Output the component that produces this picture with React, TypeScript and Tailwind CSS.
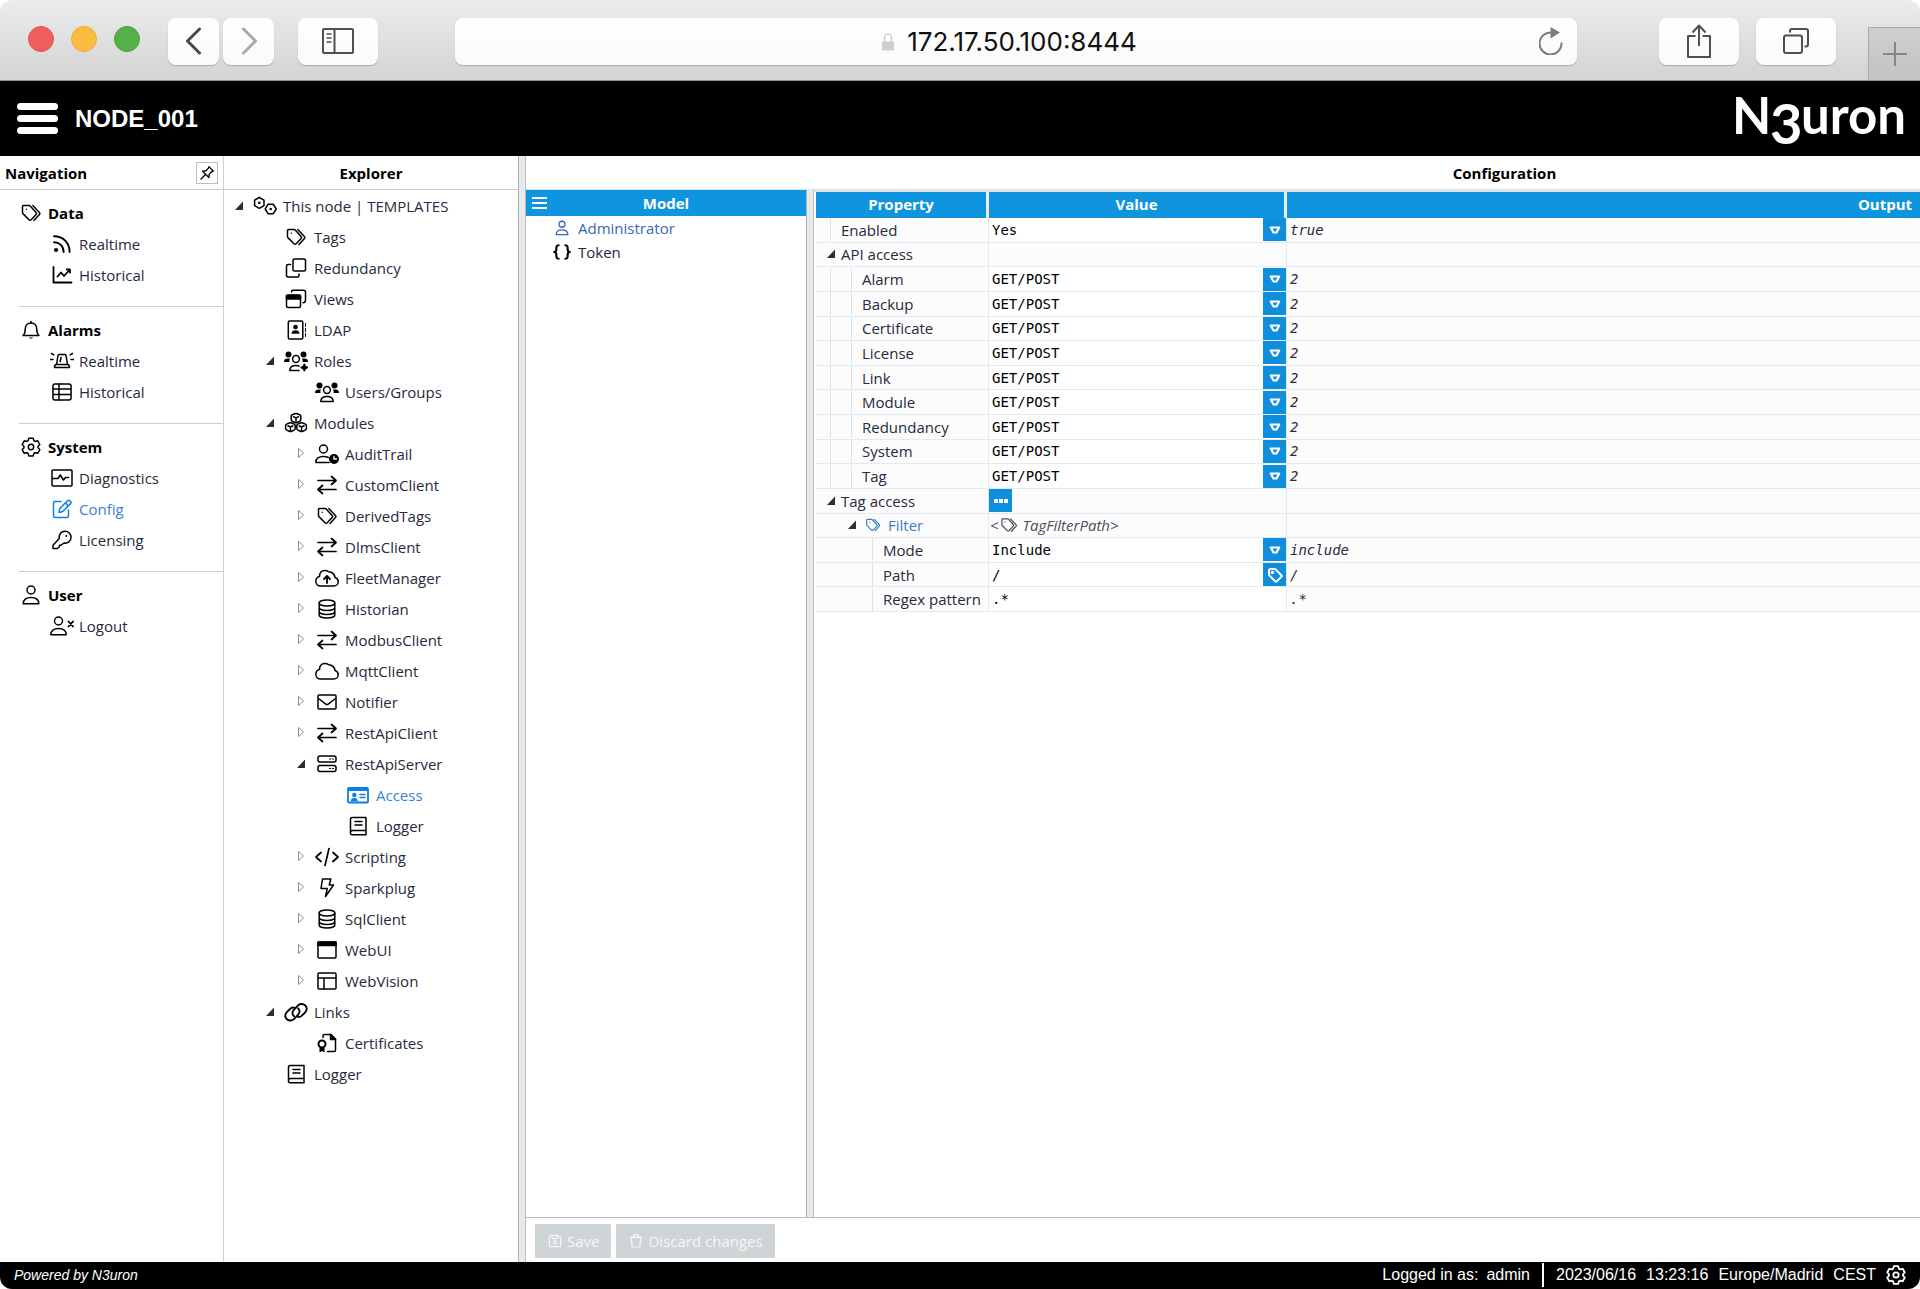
import React from 'react';

const SANS = "font-['Open_Sans','Noto_Sans',sans-serif]";
const MONO = "font-['DejaVu_Sans_Mono','Liberation_Mono',monospace]";
const ARIAL = "font-['Liberation_Sans',Arial,sans-serif]";

const TAGS = (
  <>
    <path d="M4.500 4.500h5.600a1.500 1.500 0 0 1 1.100.5l5.900 6.400a1.600 1.600 0 0 1 0 2.200l-4.900 5.200a1.500 1.500 0 0 1-2.200 0l-6.100-6.200a1.500 1.500 0 0 1-.4-1V5.500a1 1 0 0 1 1-1z" />
    <path d="M13.800 4.600l6.600 6.900a1.500 1.500 0 0 1 0 2.100l-5.400 5.900" />
    <circle cx="7.300" cy="8.300" r=".7" fill="currentColor" stroke="none" />
  </>
);

const PEOPLE = (
  <>
    <g fill="currentColor" stroke="none">
      <circle cx="4.500" cy="5.500" r="3" />
      <circle cx="19.500" cy="5.500" r="3" />
      <path d="M0 13c0-2.500 1.500-3.600 3.500-3.600h2.700c-.9 1.100-1 2.400-.7 3.600z" />
      <path d="M24 13c0-2.500-1.500-3.600-3.500-3.600h-2.700c.9 1.100 1 2.400.7 3.600z" />
    </g>
    <circle cx="12" cy="10" r="3.400" />
  </>
);

const ICONS: Record<string, React.ReactNode> = {
  tags: TAGS,
  rss: (
    <g strokeWidth="1.900">
      <circle cx="6" cy="18" r="2.100" fill="currentColor" stroke="none" />
      <path d="M4 10.300c5.500 0 9.600 3.800 9.600 9.700M4 4.300c9 0 15.600 6.300 15.600 15.700" />
    </g>
  ),
  chart: <path strokeWidth="1.800" d="M3.500 4v15.500h18M7.500 13.500l3.500-4 3 3.500 6-6.500M16.800 6.500H20v3.200" />,
  bell: (
    <>
      <path d="M4 17.500h16c-1.700-1.500-2.300-3-2.300-6.800 0-3.400-2.300-5.700-5.700-5.700s-5.700 2.300-5.700 5.700c0 3.800-.6 5.300-2.300 6.800z" />
      <path d="M12 5V3.500" />
      <path d="M10 19.500h4c-.3 1.300-3.700 1.300-4 0z" fill="currentColor" stroke="none" />
    </>
  ),
  siren: (
    <>
      <path d="M6.500 15.500L8 6.500a1 1 0 0 1 1-.9h6a1 1 0 0 1 1 .9l1.500 9M4.500 18.500c0-2 .5-3 2-3h11c1.500 0 2 1 2 3z" />
      <path d="M11 8.500l-.8 4M0 10.500h3M21 10.500h3M1.500 4.500l2.300 1.300M22.500 4.500l-2.300 1.300" />
    </>
  ),
  table: (
    <>
      <rect x="3" y="4" width="18" height="16" rx="2" />
      <path d="M3 9h18M3 14.500h18M9 4v16" />
    </>
  ),
  gear: (
    <>
      <path d="M9.800 3.200h4.400l.7 2.500 1.200.7 2.600-.6 2.100 3.700-1.800 1.900v1.300l1.800 1.900-2.100 3.700-2.600-.6-1.200.7-.7 2.500H9.800l-.7-2.500-1.200-.7-2.600.6-2.100-3.700L5 12.700v-1.300L3.200 9.500l2.100-3.700 2.600.6 1.200-.7z" />
      <circle cx="12" cy="12" r="2.700" />
    </>
  ),
  pulse: (
    <>
      <rect x="2" y="4" width="20" height="16" rx="1" />
      <path d="M2.500 12.500H8l2.200-3.500 3.300 5 2-2.500h3" />
    </>
  ),
  edit: (
    <>
      <path d="M11 4.500H5A1.500 1.500 0 0 0 3.500 6v13A1.500 1.500 0 0 0 5 20.500h12a1.500 1.500 0 0 0 1.500-1.500v-6" />
      <path d="M9 15.500l.8-4 7.700-7.700a1.700 1.700 0 0 1 2.400 0l.6.6a1.700 1.700 0 0 1 0 2.400L12.800 14.500zM15.500 6l3 3" />
    </>
  ),
  key: (
    <>
      <path d="M3 20.500v-3.300l6.300-6.700c-.8-3.800 1.700-7.200 5.700-7.200 3.400 0 6 2.600 6 5.900 0 4-3.300 6.500-7 5.800l-3 2.200H9.500l-.3 1.800-1.900 1.500z" />
      <circle cx="16.300" cy="8" r="1" fill="currentColor" stroke="none" />
    </>
  ),
  user: (
    <>
      <circle cx="12" cy="7" r="4" />
      <path d="M4.200 20.800c0-4.300 3-6.300 7.800-6.300s7.800 2 7.800 6.300z" />
    </>
  ),
  logout: (
    <>
      <circle cx="8.500" cy="7" r="4" />
      <path d="M.8 20.800c0-4.300 3-6.300 7.700-6.300s7.700 2 7.700 6.300z" />
      <path strokeWidth="1.800" d="M18.500 7.500l4.500 5M23 7.500l-4.500 5" />
    </>
  ),
  node: (
    <>
      <path d="M6.300 3.500l4.700 2.700v5.400l-4.700 2.700-4.700-2.700V6.200z" />
      <path d="M15 10.300h5.400l2.800 4.700-2.800 4.700H15L12.200 15z" />
      <circle cx="6.300" cy="8.900" r="1.300" fill="currentColor" stroke="none" />
      <circle cx="17.700" cy="15" r="1.300" fill="currentColor" stroke="none" />
    </>
  ),
  copy: (
    <>
      <rect x="9" y="3" width="12.500" height="12" rx="1.500" />
      <path d="M6.500 8.500H4A1.500 1.500 0 0 0 2.500 10v9.500A1.500 1.500 0 0 0 4 21h9.500a1.500 1.500 0 0 0 1.500-1.500V18" />
    </>
  ),
  views: (
    <>
      <rect x="2.500" y="8" width="14" height="12.500" rx="1.500" />
      <path d="M2.500 8.500h14V12h-14z" fill="currentColor" />
      <path d="M7.500 5c0-1.200.5-1.700 1.500-1.700h10.500a2 2 0 0 1 2 2V13c0 2-.8 2.800-2.500 2.800" />
    </>
  ),
  ldap: (
    <>
      <rect x="4.300" y="3" width="14.500" height="18" rx="1.200" />
      <circle cx="11.500" cy="9" r="2.300" fill="currentColor" stroke="none" />
      <path d="M7.500 15.800c0-2.500 1.600-3.500 4-3.500s4 1 4 3.500z" fill="currentColor" stroke="none" />
      <path d="M21.500 5.500v3M21.500 10.500v3M21.500 15.500v3" strokeWidth="1" />
    </>
  ),
  roles: (
    <>
      {PEOPLE}
      <path d="M5.800 21.500c0-3.300 2-5 6.200-5 1.400 0 2.200.2 3 .5M5.800 21.500H15" />
      <path d="M20.300 15.300l1 2.200 2.200 1-2.200 1-1 2.200-1-2.200-2.200-1 2.200-1z" fill="currentColor" />
    </>
  ),
  groups: (
    <>
      {PEOPLE}
      <path d="M5.800 21.500c0-3.300 2-5 6.200-5s6.200 1.700 6.200 5z" />
    </>
  ),
  modules: (
    <>
      <path d="M10.800 2.700a3 3 0 0 1 2.400 0l2.600 1.100a1.600 1.600 0 0 1 1 1.500v3.500a1.600 1.600 0 0 1-1 1.500l-2.600 1.200a3 3 0 0 1-2.400 0l-2.600-1.200a1.600 1.600 0 0 1-1-1.500V5.300a1.600 1.600 0 0 1 1-1.500z" />
      <path d="M5.200 12a3 3 0 0 1 2.400 0l2.600 1.100a1.600 1.600 0 0 1 1 1.500v3a1.600 1.600 0 0 1-1 1.500l-2.600 1.200a3 3 0 0 1-2.400 0l-2.600-1.200a1.600 1.600 0 0 1-1-1.500v-3a1.600 1.600 0 0 1 1-1.500z" />
      <path d="M16.400 12a3 3 0 0 1 2.400 0l2.600 1.100a1.600 1.600 0 0 1 1 1.500v3a1.600 1.600 0 0 1-1 1.500l-2.600 1.200a3 3 0 0 1-2.400 0l-2.600-1.200a1.600 1.600 0 0 1-1-1.500v-3a1.600 1.600 0 0 1 1-1.500z" />
      <path d="M9.500 5.700L12 7l2.500-1.300M12 7v4M3.900 14.800L6.400 16l2.500-1.200M6.400 16v4M15.100 14.800l2.500 1.200 2.500-1.200M17.600 16v4" />
    </>
  ),
  audit: (
    <>
      <circle cx="8.500" cy="7" r="4" />
      <path d="M14 20.500H.8c0-4 3-6 7.700-6 2 0 3.600.3 4.800 1" />
      <circle cx="19" cy="17" r="5" fill="currentColor" stroke="none" />
      <path d="M19 14.500V17h2.500" stroke="#fff" strokeWidth="1.300" />
    </>
  ),
  swap: <path strokeWidth="1.700" d="M3 7.500h18M16.500 3.500l4.500 4-4.500 4M21 16.500H3M7.500 12.500l-4.500 4 4.500 4" />,
  cloudUp: (
    <>
      <path d="M5.500 20h13.200c2.600 0 4.500-1.900 4.500-4.300 0-2.200-1.200-3.600-3.200-4.200-.3-2.600-1.700-4.300-3.900-5.200-.8-.3-1.600-.4-2.400-.5C12.600 4.800 11.200 4.500 9.600 4.500c-3.200 0-5.300 2.500-5 5.700-2.400.8-3.800 2.600-3.800 5 0 2.700 2 4.800 4.700 4.800z" />
      <path strokeWidth="1.800" d="M12 17v-6.500M9 13l3-3 3 3" />
    </>
  ),
  cloud: (
    <path d="M5.500 20h13.200c2.600 0 4.500-1.900 4.500-4.300 0-2.200-1.200-3.600-3.200-4.200-.3-2.600-1.700-4.300-3.900-5.200-.8-.3-1.600-.4-2.400-.5C12.600 4.800 11.200 4.500 9.600 4.500c-3.200 0-5.300 2.500-5 5.700-2.400.8-3.800 2.600-3.800 5 0 2.700 2 4.800 4.700 4.800z" />
  ),
  database: (
    <>
      <ellipse cx="12" cy="6" rx="7.800" ry="3" />
      <path d="M4.200 6v12c0 1.700 3.500 3 7.800 3s7.800-1.300 7.800-3V6M4.200 10.500c0 1.700 3.500 3 7.800 3s7.800-1.300 7.800-3M4.200 14.500c0 1.700 3.500 3 7.800 3s7.800-1.300 7.800-3" />
    </>
  ),
  mail: (
    <>
      <rect x="3" y="5" width="18" height="14" rx="1" />
      <path d="M3.500 8.500l7.300 5.600a2 2 0 0 0 2.400 0l7.300-5.600" />
    </>
  ),
  server: (
    <>
      <rect x="3" y="4" width="18" height="6" rx="2" />
      <rect x="3" y="13.500" width="18" height="6" rx="2" />
      <path d="M14.500 7h1M17.500 7h1M14.500 16.500h1M17.500 16.500h1" strokeWidth="1.200" />
    </>
  ),
  access: (
    <>
      <rect x="2" y="5" width="20" height="14.500" rx="1" strokeWidth="1.800" />
      <path d="M2 4.500h20V8H2zM4.800 18.500c0-2.700 1.400-3.500 3.500-3.500s3.500.8 3.500 3.500z" fill="currentColor" stroke="none" />
      <circle cx="8.300" cy="12" r="2.200" fill="currentColor" stroke="none" />
      <path d="M14 11.500h5M14 14.500h5" />
    </>
  ),
  book: (
    <>
      <path d="M20 16.500V3.500H6A1.500 1.500 0 0 0 4.500 5v14A1.500 1.500 0 0 0 6 20.800h14v-4.300H6.500c-1.200 0-2 .8-2 2" />
      <path d="M9 7.500h7M9 11h7" strokeWidth="1.600" />
    </>
  ),
  code: <path strokeWidth="1.700" d="M6 7.500L1 12l5 4.500M18 7.500l5 4.500-5 4.500M14 3.500L10 20.500" />,
  bolt: <path d="M7.500 3h8.300l-1.600 6h4.300L10.500 20.500l1.800-8H6z" />,
  window: (
    <>
      <rect x="3" y="4" width="18" height="16" rx="1" />
      <path d="M3 4h18v3.500H3z" fill="currentColor" />
    </>
  ),
  layout: (
    <>
      <rect x="3" y="4" width="18" height="16" rx="1" />
      <path d="M3 9h18M9 9v11" />
    </>
  ),
  link: (
    <>
      <path strokeWidth="1.900" d="M10 16.300c-2-1.500-2-4.500-.2-6.400l4-4.300c1.800-1.900 5.200-2.200 7.300-.3 2.200 1.900 2.100 5.100.1 7.100l-3.600 3.500c-1 .9-2.300 1.300-3.600 1" />
      <path strokeWidth="1.900" d="M14 8.200c2 1.500 2 4.500.2 6.400l-4 4.300c-1.800 1.900-5.200 2.200-7.300.3-2.200-1.900-2.100-5.100-.1-7.100l3.600-3.500c1-.9 2.300-1.300 3.600-1" />
    </>
  ),
  certificate: (
    <>
      <path d="M8 6.500V5a1.500 1.500 0 0 1 1.500-1.500H16l4.500 4.500v11a1.500 1.500 0 0 1-1.500 1.500h-6.500" />
      <path d="M15.500 3.500V8.500h5z" fill="currentColor" />
      <circle cx="7" cy="13" r="3.500" strokeWidth="2" />
      <path d="M4.500 16.500v5L7 20l2.500 1.500v-5z" fill="currentColor" stroke="none" />
    </>
  ),
  braces: <path strokeWidth="2.800" d="M7.500 3c-3.500 0-3 3-3 5 0 2-.8 4-3 4 2.200 0 3 2 3 4s-.5 5 3 5M16.500 3c3.500 0 3 3 3 5 0 2 .8 4 3 4-2.200 0-3 2-3 4s.5 5-3 5" />,
  pin: <path d="M14.500 3.500l6 6-2 .5-3.500 3.500-.5 4.500-8.500-8.500 4.500-.5L14 5.500zM10 14l-6 6" />,
  save: (
    <>
      <path d="M3.500 5A1.500 1.500 0 0 1 5 3.500h11.500l4 4V19a1.500 1.500 0 0 1-1.500 1.500H5A1.500 1.500 0 0 1 3.500 19z" />
      <path d="M7.500 4v4.500h8V4" />
      <circle cx="12" cy="14" r="2.200" />
    </>
  ),
  trash: <path d="M3 6.500h18M8 6c0-3 1.500-3.500 4-3.500S16 3 16 6M5 6.500l1.200 14.500h11.600L19 6.500" />,
  tag: (
    <>
      <path d="M4 5.500A1.500 1.500 0 0 1 5.500 4h6.700l8.300 8.300a1.500 1.500 0 0 1 0 2l-6.200 6.200a1.500 1.500 0 0 1-2 0L4 12.200z" />
      <circle cx="8.500" cy="8.500" r="1" fill="currentColor" />
    </>
  ),
};

function Icon({ name, className = 'size-6', weight = 1.5 }: { name: string; className?: string; weight?: number }) {
  return (
    <svg
      viewBox="0 0 24 24"
      className={`shrink-0 ${className}`}
      fill="none"
      stroke="currentColor"
      strokeWidth={weight}
      strokeLinecap="round"
      strokeLinejoin="round"
      aria-hidden="true"
    >
      {ICONS[name]}
    </svg>
  );
}

function Toggle({ state }: { state?: 'open' | 'closed' }) {
  if (!state) return <span className="w-3.5 shrink-0" />;
  return (
    <svg viewBox="0 0 14 14" className="size-3.5 shrink-0" aria-hidden="true">
      {state === 'open' ? (
        <path d="M11 2.500V11H3z" fill="#2d2d33" />
      ) : (
        <path d="M4.500 1.500l5 4.500-5 4.500z" fill="none" stroke="#8b8f98" />
      )}
    </svg>
  );
}

function BrowserBar() {
  const btn = 'flex h-[47px] shrink-0 items-center justify-center rounded-lg bg-gradient-to-b from-white to-[#fafafa] shadow-[0_1px_1px_rgba(0,0,0,0.22)]';
  return (
    <div className="flex h-[81px] items-center border-b border-[#8f9392] bg-gradient-to-b from-[#ececec] to-[#d3d3d3] pt-0.5 pl-7">
      <div className="mb-1 flex gap-[17px]">
        <span className="size-[26px] rounded-full border border-[#e0524f] bg-[#ee5f5c]" />
        <span className="size-[26px] rounded-full border border-[#eeab33] bg-[#fcbc40]" />
        <span className="size-[26px] rounded-full border border-[#45a03c] bg-[#55b04a]" />
      </div>
      <div className="ml-7 flex gap-1">
        <button aria-label="Back" className={`${btn} w-[51px] text-[#4a4a4a]`}>
          <svg viewBox="0 0 16 28" className="h-7 w-4" fill="none" stroke="currentColor" strokeWidth="3" strokeLinecap="round" strokeLinejoin="round">
            <path d="M13.500 2L1.500 14l12 12" />
          </svg>
        </button>
        <button aria-label="Forward" className={`${btn} w-[51px] text-[#a9a9a9]`}>
          <svg viewBox="0 0 16 28" className="h-7 w-4" fill="none" stroke="currentColor" strokeWidth="3" strokeLinecap="round" strokeLinejoin="round">
            <path d="M2.500 2l12 12-12 12" />
          </svg>
        </button>
      </div>
      <button aria-label="Show sidebar" className={`${btn} ml-6 w-20 text-[#4f4f4f]`}>
        <svg viewBox="0 0 32 26" className="h-[26px] w-8" fill="none" stroke="currentColor" strokeWidth="2">
          <rect x="1" y="1" width="30" height="24" rx="1" />
          <path d="M12.500 1v24" />
          <path d="M4.500 6h5M4.500 10h5M4.500 14h5" strokeWidth="1.500" />
        </svg>
      </button>
      <div className={`${btn} mr-[82px] ml-[77px] min-w-0 flex-1 pr-3.5 pl-6`}>
        <div className="flex flex-1 items-center justify-center gap-3 pt-0.5">
          <svg viewBox="0 0 14 18" className="h-[18px] w-3.5" fill="none" stroke="#cfcfcf" strokeWidth="1.500" aria-hidden="true">
            <path d="M3.500 9V5a3.500 4 0 0 1 7 0v4" />
            <rect x="1" y="8.500" width="12" height="9" rx="1" fill="#cfcfcf" stroke="none" />
          </svg>
          <span className="font-['Inter',sans-serif] text-[26px] leading-8 text-[#111]">172.17.50.100:8444</span>
        </div>
        <button aria-label="Reload">
          <svg viewBox="0 0 24 28" className="h-7 w-6" fill="none" stroke="#7c7c7c" strokeWidth="2">
            <path d="M12.500 5.500A11 11 0 1 0 22.500 15.500" />
            <path d="M11.500 0l9.500 5.500-9.500 6z" fill="#7c7c7c" stroke="none" />
          </svg>
        </button>
      </div>
      <button aria-label="Share" className={`${btn} w-20 text-[#4f4f4f]`}>
        <svg viewBox="0 0 24 34" className="h-[34px] w-6" fill="none" stroke="currentColor" strokeWidth="2" strokeLinejoin="round">
          <path d="M8.500 12H1v21h22V12h-7.500M12 22V2M5.500 8.500L12 1.500l6.500 7" />
        </svg>
      </button>
      <button aria-label="Show tabs" className={`${btn} ml-[17px] w-20 text-[#4f4f4f]`}>
        <svg viewBox="0 0 26 26" className="size-[26px]" fill="none" stroke="currentColor" strokeWidth="2">
          <rect x="1" y="7.500" width="18" height="17.500" rx="2" />
          <path d="M7 4.500V3a2 2 0 0 1 2-2h14a2 2 0 0 1 2 2v13.500a2 2 0 0 1-2 2h-1.500" />
        </svg>
      </button>
      <button aria-label="New tab" className="ml-8 flex h-[53px] w-[52px] shrink-0 items-center justify-center self-end border-t border-l border-[#a8a8a8] bg-gradient-to-b from-[#cfcfcf] to-[#c3c3c3]">
        <svg viewBox="0 0 24 24" className="size-6" fill="none" stroke="#858585" strokeWidth="2">
          <path d="M12 0v24M0 12h24" />
        </svg>
      </button>
    </div>
  );
}

function AppHeader() {
  return (
    <header className="flex h-[75px] items-center bg-black pr-2.5 pl-[17px] text-white">
      <button aria-label="Menu" className="flex w-[41px] flex-col gap-[5px]">
        <span className="h-[7px] rounded-sm bg-white" />
        <span className="h-[7px] rounded-sm bg-white" />
        <span className="h-[7px] rounded-sm bg-white" />
      </button>
      <h1 className={`${ARIAL} ml-[17px] flex-1 text-2xl font-bold`}>NODE_001</h1>
      <svg viewBox="0 0 180 75" className="h-[75px] w-[180px]" role="img" aria-label="N3uron">
        <g fill="#fff" fontFamily="Lato, sans-serif" fontSize="51" fontWeight="700">
          <text x="2" y="53">
            N<tspan x="40" y="63" fontSize="56">3</tspan><tspan x="71" y="53">uron</tspan>
          </text>
        </g>
      </svg>
    </header>
  );
}

type NavItem = { label: string; icon: string; active?: boolean };

const navGroups: { title: string; icon: string; items: NavItem[] }[] = [
  { title: 'Data', icon: 'tags', items: [{ label: 'Realtime', icon: 'rss' }, { label: 'Historical', icon: 'chart' }] },
  { title: 'Alarms', icon: 'bell', items: [{ label: 'Realtime', icon: 'siren' }, { label: 'Historical', icon: 'table' }] },
  {
    title: 'System',
    icon: 'gear',
    items: [
      { label: 'Diagnostics', icon: 'pulse' },
      { label: 'Config', icon: 'edit', active: true },
      { label: 'Licensing', icon: 'key' },
    ],
  },
  { title: 'User', icon: 'user', items: [{ label: 'Logout', icon: 'logout' }] },
];

function Navigation() {
  return (
    <nav className="w-56 shrink-0 border-r border-[#d3ccd2]">
      <div className="flex h-[34px] items-center justify-between border-b border-[#c3ccd9] pr-[5px] pl-[5px]">
        <h2 className="font-bold text-black">Navigation</h2>
        <button aria-label="Pin navigation" className="flex size-[22px] items-center justify-center border border-[#b4bfca] text-black">
          <Icon name="pin" className="size-[18px]" weight={1.8} />
        </button>
      </div>
      {navGroups.map(g => (
        <section key={g.title} className="group">
          <h3 className="mt-[7px] flex h-[31px] items-center gap-[5px] pl-[19px] font-bold text-black">
            <Icon name={g.icon} />
            {g.title}
          </h3>
          {g.items.map(i => (
            <a key={i.label} href="#" className={`flex h-[31px] items-center gap-[5px] pl-[50px] ${i.active ? 'text-[#3b7fd4]' : ''}`}>
              <Icon name={i.icon} className={`size-6 ${i.active ? 'text-[#0f7fe0]' : 'text-black'}`} />
              {i.label}
            </a>
          ))}
          <div className="ml-[19px] border-b border-[#c9cddb] pt-4 group-last:hidden" />
        </section>
      ))}
    </nav>
  );
}

type TreeNode = { label: string; icon: string; level: number; state?: 'open' | 'closed'; active?: boolean };

const tree: TreeNode[] = [
  { label: 'This node | TEMPLATES', icon: 'node', level: 0, state: 'open' },
  { label: 'Tags', icon: 'tags', level: 1 },
  { label: 'Redundancy', icon: 'copy', level: 1 },
  { label: 'Views', icon: 'views', level: 1 },
  { label: 'LDAP', icon: 'ldap', level: 1 },
  { label: 'Roles', icon: 'roles', level: 1, state: 'open' },
  { label: 'Users/Groups', icon: 'groups', level: 2 },
  { label: 'Modules', icon: 'modules', level: 1, state: 'open' },
  { label: 'AuditTrail', icon: 'audit', level: 2, state: 'closed' },
  { label: 'CustomClient', icon: 'swap', level: 2, state: 'closed' },
  { label: 'DerivedTags', icon: 'tags', level: 2, state: 'closed' },
  { label: 'DlmsClient', icon: 'swap', level: 2, state: 'closed' },
  { label: 'FleetManager', icon: 'cloudUp', level: 2, state: 'closed' },
  { label: 'Historian', icon: 'database', level: 2, state: 'closed' },
  { label: 'ModbusClient', icon: 'swap', level: 2, state: 'closed' },
  { label: 'MqttClient', icon: 'cloud', level: 2, state: 'closed' },
  { label: 'Notifier', icon: 'mail', level: 2, state: 'closed' },
  { label: 'RestApiClient', icon: 'swap', level: 2, state: 'closed' },
  { label: 'RestApiServer', icon: 'server', level: 2, state: 'open' },
  { label: 'Access', icon: 'access', level: 3, active: true },
  { label: 'Logger', icon: 'book', level: 3 },
  { label: 'Scripting', icon: 'code', level: 2, state: 'closed' },
  { label: 'Sparkplug', icon: 'bolt', level: 2, state: 'closed' },
  { label: 'SqlClient', icon: 'database', level: 2, state: 'closed' },
  { label: 'WebUI', icon: 'window', level: 2, state: 'closed' },
  { label: 'WebVision', icon: 'layout', level: 2, state: 'closed' },
  { label: 'Links', icon: 'link', level: 1, state: 'open' },
  { label: 'Certificates', icon: 'certificate', level: 2 },
  { label: 'Logger', icon: 'book', level: 1 },
];

const treeIndent = ['pl-2', 'pl-[39px]', 'pl-[70px]', 'pl-[101px]'];

function Explorer() {
  return (
    <section className="w-[294px] shrink-0">
      <h2 className="flex h-[34px] items-center justify-center border-b border-[#c3ccd9] font-bold text-black">Explorer</h2>
      <ul>
        {tree.map((n, i) => (
          <li key={i} className={`flex h-[31px] items-center ${treeIndent[n.level]}`}>
            <Toggle state={n.state} />
            <a href="#" className={`ml-[7px] flex items-center gap-1.5 whitespace-nowrap ${n.active ? 'text-[#3b7fd4]' : ''}`}>
              <Icon name={n.icon} className={`size-6 ${n.active ? 'text-[#0f7fe0]' : 'text-black'}`} />
              {n.label}
            </a>
          </li>
        ))}
      </ul>
    </section>
  );
}

function ModelPanel() {
  return (
    <section className="w-[280px] shrink-0">
      <div className="flex h-[26px] items-center bg-[#0f94e0] text-white">
        <button aria-label="Model menu" className="ml-1.5 flex w-[15px] flex-col gap-[3px]">
          <span className="h-0.5 bg-white" />
          <span className="h-0.5 bg-white" />
          <span className="h-0.5 bg-white" />
        </button>
        <h3 className="flex-1 pr-[21px] text-center font-bold">Model</h3>
      </div>
      <ul>
        <li>
          <a href="#" className="flex h-6 items-center gap-[7px] pl-[27px] text-[#3a66b8]">
            <Icon name="user" className="size-[18px]" weight={1.7} />
            Administrator
          </a>
        </li>
        <li>
          <a href="#" className="flex h-6 items-center gap-[7px] pl-[27px]">
            <Icon name="braces" className="size-[18px] text-black" />
            Token
          </a>
        </li>
      </ul>
    </section>
  );
}

type Row = {
  label: string;
  level: number;
  kind: 'select' | 'text' | 'tag' | 'group' | 'list' | 'filter';
  value?: string;
  output?: string;
};

const rows: Row[] = [
  { label: 'Enabled', level: 0, kind: 'select', value: 'Yes', output: 'true' },
  { label: 'API access', level: 0, kind: 'group' },
  ...['Alarm', 'Backup', 'Certificate', 'License', 'Link', 'Module', 'Redundancy', 'System', 'Tag'].map(
    (label): Row => ({ label, level: 1, kind: 'select', value: 'GET/POST', output: '2' })
  ),
  { label: 'Tag access', level: 0, kind: 'list' },
  { label: 'Filter', level: 1, kind: 'filter' },
  { label: 'Mode', level: 2, kind: 'select', value: 'Include', output: 'include' },
  { label: 'Path', level: 2, kind: 'tag', value: '/', output: '/' },
  { label: 'Regex pattern', level: 2, kind: 'text', value: '.*', output: '.*' },
];

function PropertyCell({ row, index }: { row: Row; index: number }) {
  const open = row.kind === 'group' || row.kind === 'list' || row.kind === 'filter';
  // the outer guide stops at the last top-level branch
  const line = (depth: number) => (depth === 0 ? index < 11 : depth === row.level);
  return (
    <div className="flex h-[23px] items-center pl-1 whitespace-nowrap">
      {Array.from({ length: row.level + 1 }, (_, d) => (
        <span key={d} className="flex h-[23px] w-[21px] items-center justify-center">
          {open && d === row.level ? <Toggle state="open" /> : line(d) && <span className="h-full border-l border-[#dfe3e8]" />}
        </span>
      ))}
      {row.kind === 'filter' ? (
        <a href="#" className="flex items-center gap-1.5 pl-0.5 text-[#3b7fc4]">
          <Icon name="tags" className="size-[18px]" weight={1.6} />
          {row.label}
        </a>
      ) : (
        row.label
      )}
    </div>
  );
}

function ValueCell({ row }: { row: Row }) {
  const field = `${MONO} h-[23px] min-w-0 flex-1 appearance-none bg-transparent pl-[3px] text-sm text-black outline-none`;
  const square = 'flex size-[23px] shrink-0 items-center justify-center bg-[#0f8fdb] text-white';
  switch (row.kind) {
    case 'select':
      return (
        <div className="flex">
          <select aria-label={row.label} className={field} defaultValue={row.value}>
            <option>{row.value}</option>
          </select>
          <span className={`${square} pointer-events-none`}>
            <svg viewBox="0 0 12 10" className="h-2.5 w-3" fill="none" stroke="currentColor" strokeWidth="2.200" strokeLinejoin="round">
              <path d="M1.800 2.500h8.400L7.500 7.500h-3z" />
            </svg>
          </span>
        </div>
      );
    case 'tag':
      return (
        <div className="flex">
          <input aria-label={row.label} className={field} defaultValue={row.value} />
          <button aria-label="Browse tags" className={square}>
            <Icon name="tag" className="size-[18px]" weight={2.6} />
          </button>
        </div>
      );
    case 'text':
      return (
        <div className="flex">
          <input aria-label={row.label} className={field} defaultValue={row.value} />
        </div>
      );
    case 'list':
      return (
        <button aria-label="Tag access options" className={square}>
          <svg viewBox="0 0 14 4" className="h-1 w-3.5" fill="currentColor">
            <path d="M0 0h4v4H0zM5 0h4v4H5zM10 0h4v4h-4z" />
          </svg>
        </button>
      );
    case 'filter':
      return (
        <div className="flex h-[23px] items-center pl-px text-[#4a4e58] italic">
          &lt;
          <Icon name="tags" className="size-5" />
          <span className="pl-1">TagFilterPath&gt;</span>
        </div>
      );
    default:
      return null;
  }
}

function PropertyTable() {
  const th = 'bg-[#0f94e0] p-0 pb-0.5 text-center font-bold';
  return (
    <div className="min-w-0 flex-1 border-t-2 border-[#dfe5ea] pl-0.5">
      <table className="h-[420px] w-full table-fixed border-separate border-spacing-0">
        <colgroup>
          <col className="w-[173px]" />
          <col className="w-[298px]" />
          <col />
        </colgroup>
        <thead>
          <tr className="h-[26px] text-white">
            <th className={`${th} border-r-3 border-[#e9eef4]`}>Property</th>
            <th className={`${th} border-r-3 border-[#e9eef4]`}>Value</th>
            <th className={th}>Output</th>
          </tr>
        </thead>
        <tbody>
          {rows.map((r, i) => {
            const editable = r.value !== undefined;
            return (
              <tr key={r.label}>
                <td className="border-r border-b border-[#e0ecf2] bg-[#fcfcfc] p-0">
                  <PropertyCell row={r} index={i} />
                </td>
                <td className={`border-r border-b border-[#e0ecf2] p-0 ${editable ? 'bg-white' : 'bg-[#fcfcfc]'}`}>
                  <ValueCell row={r} />
                </td>
                <td className={`${MONO} border-b border-[#e0ecf2] bg-[#fcfcfc] p-0 pl-[3px] text-sm italic`}>{r.output}</td>
              </tr>
            );
          })}
        </tbody>
      </table>
    </div>
  );
}

function Splitter() {
  return <div className="w-2 shrink-0 border-x border-r-[#c4b9be] border-l-[#a9b4b8] bg-[#e6eaeb]" />;
}

function Configuration() {
  const btn = 'flex h-[34px] items-center gap-1 bg-[#cfd4d7] px-3 text-[#f5f7f8]';
  return (
    // wider than the window on purpose, the output column runs off to the right
    <section className="flex min-w-[1957px] flex-1 flex-col">
      <h2 className="flex h-[34px] items-center justify-center border-b border-[#dde2e7] font-bold text-black">Configuration</h2>
      <div className="flex flex-1">
        <ModelPanel />
        <Splitter />
        <PropertyTable />
      </div>
      <div className="flex h-[45px] gap-[5px] border-t border-[#b9b6c6] pt-1.5 pl-[9px]">
        <button disabled className={btn}>
          <Icon name="save" className="size-4" weight={1.8} />
          Save
        </button>
        <button disabled className={btn}>
          <Icon name="trash" className="size-4" weight={1.8} />
          Discard changes
        </button>
      </div>
    </section>
  );
}

function StatusBar() {
  return (
    <footer className={`${ARIAL} flex h-[27px] items-center bg-black pr-3 pb-0.5 pl-3.5 text-base leading-6 text-white`}>
      <span className="flex-1 text-sm italic">Powered by N3uron</span>
      <span>Logged in as:</span>
      <span className="ml-2">admin</span>
      <span className="mx-3 h-6 w-0.5 bg-white" />
      <div className="flex gap-2.5">
        <span>2023/06/16</span>
        <span>13:23:16</span>
        <span>Europe/Madrid</span>
        <span>CEST</span>
      </div>
      <button aria-label="Settings" className="ml-2">
        <Icon name="gear" weight={1.8} />
      </button>
    </footer>
  );
}

export default function App() {
  return (
    <div className="min-h-screen bg-white">
      <div className={`${SANS} flex min-h-screen flex-col overflow-hidden rounded-xl bg-white text-[15px] leading-5 text-[#262a3c]`}>
        <BrowserBar />
        <AppHeader />
        <main className="flex flex-1 overflow-hidden">
          <Navigation />
          <Explorer />
          <Splitter />
          <Configuration />
        </main>
        <StatusBar />
      </div>
    </div>
  );
}
